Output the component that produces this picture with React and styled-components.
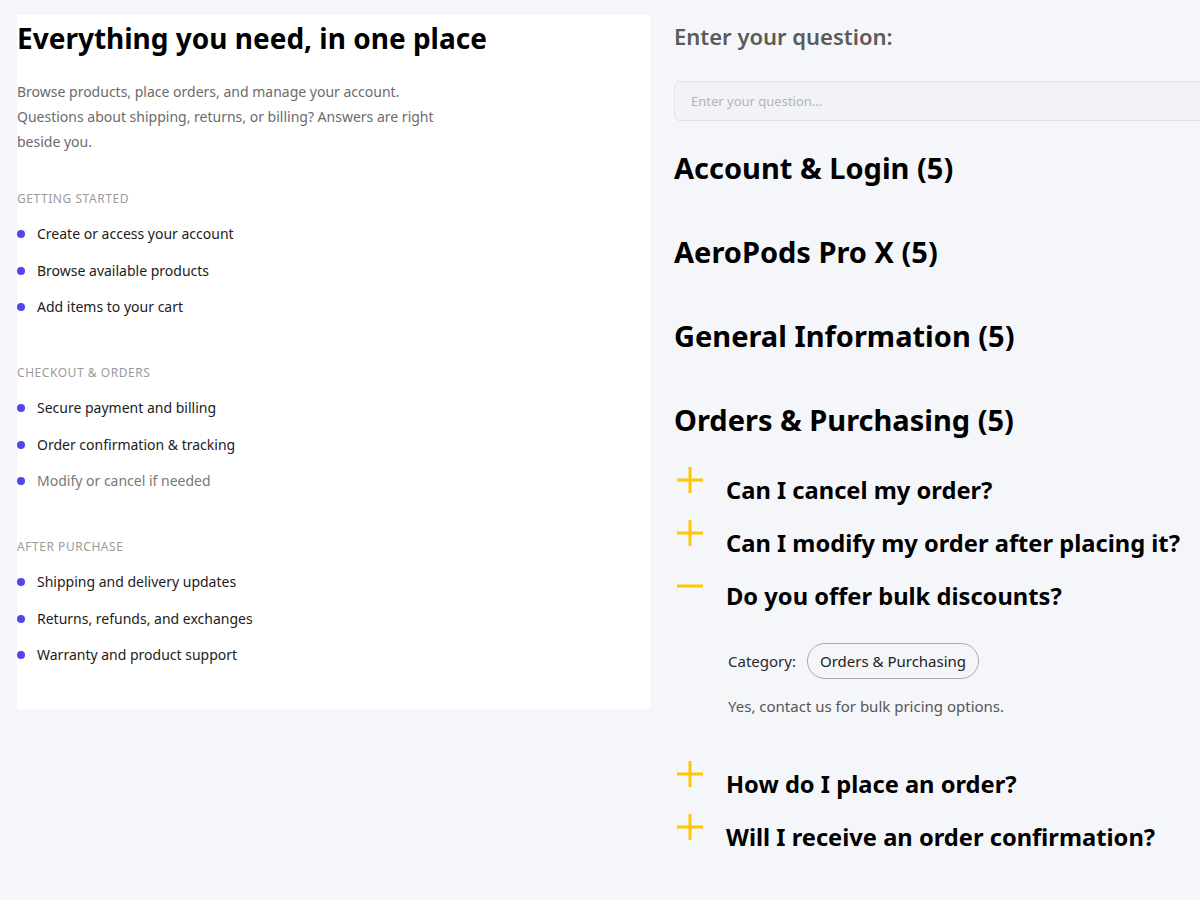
import React, { useState } from "react";
import styled, { createGlobalStyle } from "styled-components";

const GlobalStyle = createGlobalStyle`
  html, body {
    margin: 0;
    padding: 0;
    background: #f5f6fa;
    overflow: hidden;
  }
  body {
    font-family: "Noto Sans", "Open Sans", sans-serif;
    color: #111;
  }
`;

const Page = styled.div`
  display: grid;
  grid-template-columns: 633px 620px;
  column-gap: 24px;
  align-items: start;
  padding: 15px 0 0 17px;
  width: 1300px;
`;

const Guide = styled.aside`
  background: #fff;
  padding: 6px 0 43px;
`;

const Title = styled.h1`
  margin: 0;
  font-size: 28px;
  line-height: 34px;
  font-weight: 700;
  color: #000;
`;

const Intro = styled.p`
  margin: 24px 0 37px;
  max-width: 440px;
  font-size: 14px;
  line-height: 25px;
  color: #6b6b6b;
`;

const Sections = styled.div`
  display: flex;
  flex-direction: column;
  gap: 47px;
`;

const SectionLabel = styled.div`
  font-size: 12px;
  line-height: 16px;
  letter-spacing: 0.55px;
  text-transform: uppercase;
  color: #9b9b9b;
  margin-bottom: 16px;
`;

const Steps = styled.ul`
  list-style: none;
  margin: 0;
  padding: 0;
  display: flex;
  flex-direction: column;
  gap: 14.5px;
`;

const Step = styled.li`
  display: flex;
  align-items: center;
  gap: 12px;
  font-size: 14px;
  line-height: 22px;
  color: ${(props) => (props.muted ? "#787878" : "#1c1c1c")};

  &::before {
    content: "";
    width: 8px;
    height: 8px;
    border-radius: 50%;
    background: #5046e5;
    flex-shrink: 0;
  }
`;

const Help = styled.main`
  padding-top: 7px;
`;

const AskLabel = styled.label`
  display: block;
  font-size: 22px;
  line-height: 28px;
  font-weight: 600;
  color: #5b5b5b;
  margin-bottom: 31px;
`;

const AskInput = styled.input`
  display: block;
  box-sizing: border-box;
  width: 100%;
  height: 40px;
  padding: 0 16px;
  border: 1px solid #e2e3e8;
  border-radius: 6px;
  background: #f2f3f7;
  font-family: inherit;
  font-size: 13px;
  color: #333;
  outline: none;

  &::placeholder {
    color: #b3b3b8;
  }
`;

const Topics = styled.div`
  display: flex;
  flex-direction: column;
  gap: 50px;
  margin: 30px 0;
`;

const Topic = styled.h2`
  margin: 0;
  font-size: 29px;
  line-height: 34px;
  font-weight: 700;
  color: #000;
`;

const Questions = styled.div`
  display: flex;
  flex-direction: column;
  gap: 15px;
`;

const QuestionRow = styled.button`
  display: flex;
  align-items: flex-start;
  gap: 23px;
  padding: 0;
  border: 0;
  background: none;
  cursor: pointer;
  font-family: inherit;
  text-align: left;
  color: #000;
`;

const ToggleIcon = styled.svg`
  width: 26px;
  height: 26px;
  flex-shrink: 0;
  margin-left: 3px;
`;

const QuestionText = styled.span`
  margin-top: 8px;
  font-size: 23.7px;
  line-height: 30px;
  font-weight: 700;
`;

const Answer = styled.div`
  padding: 32px 0 29px 54px;
`;

const CategoryLine = styled.div`
  display: flex;
  align-items: center;
  gap: 11px;
  font-size: 15px;
  color: #2a2a2a;
`;

const Pill = styled.span`
  display: inline-flex;
  align-items: center;
  height: 36px;
  box-sizing: border-box;
  padding: 0 12px;
  border: 1px solid #ababab;
  border-radius: 18px;
  font-size: 15px;
  color: #222;
`;

const AnswerText = styled.p`
  margin: 16px 0 0;
  font-size: 15px;
  line-height: 22px;
  color: #555;
`;

const guide = [
  {
    label: "Getting started",
    steps: ["Create or access your account", "Browse available products", "Add items to your cart"],
  },
  {
    label: "Checkout & orders",
    steps: ["Secure payment and billing", "Order confirmation & tracking", "Modify or cancel if needed"],
    muted: 2,
  },
  {
    label: "After purchase",
    steps: ["Shipping and delivery updates", "Returns, refunds, and exchanges", "Warranty and product support"],
  },
];

const topics = ["Account & Login", "AeroPods Pro X", "General Information", "Orders & Purchasing"];

const faqs = [
  { q: "Can I cancel my order?", a: "Yes, orders can be cancelled before they ship." },
  { q: "Can I modify my order after placing it?", a: "Changes are possible until the order is processed." },
  { q: "Do you offer bulk discounts?", a: "Yes, contact us for bulk pricing options." },
  { q: "How do I place an order?", a: "Add items to your cart and proceed to checkout." },
  { q: "Will I receive an order confirmation?", a: "Yes, a confirmation email is sent right away." },
];

// plus when collapsed, minus when open
const Toggle = ({ open }) => (
  <ToggleIcon viewBox="0 0 26 26" fill="none" stroke="#ffc700" strokeWidth="3">
    <line x1="0" y1="13" x2="26" y2="13" />
    {!open && <line x1="13" y1="0" x2="13" y2="26" />}
  </ToggleIcon>
);

export default function App() {
  const [openIndex, setOpenIndex] = useState(2);

  return (
    <>
      <GlobalStyle />
      <Page>
        <Guide>
          <Title>Everything you need, in one place</Title>
          <Intro>
            Browse products, place orders, and manage your account. Questions about shipping, returns, or
            billing? Answers are right beside you.
          </Intro>
          <Sections>
            {guide.map((section) => (
              <section key={section.label}>
                <SectionLabel>{section.label}</SectionLabel>
                <Steps>
                  {section.steps.map((step, i) => (
                    <Step key={step} muted={section.muted === i}>
                      {step}
                    </Step>
                  ))}
                </Steps>
              </section>
            ))}
          </Sections>
        </Guide>

        <Help>
          <AskLabel htmlFor="ask">Enter your question:</AskLabel>
          <AskInput id="ask" placeholder="Enter your question..." />
          <Topics>
            {topics.map((t) => (
              <Topic key={t}>{t} (5)</Topic>
            ))}
          </Topics>
          <Questions>
            {faqs.map((item, i) => (
              <div key={item.q}>
                <QuestionRow onClick={() => setOpenIndex(openIndex === i ? -1 : i)}>
                  <Toggle open={openIndex === i} />
                  <QuestionText>{item.q}</QuestionText>
                </QuestionRow>
                {openIndex === i && (
                  <Answer>
                    <CategoryLine>
                      Category: <Pill>Orders &amp; Purchasing</Pill>
                    </CategoryLine>
                    <AnswerText>{item.a}</AnswerText>
                  </Answer>
                )}
              </div>
            ))}
          </Questions>
        </Help>
      </Page>
    </>
  );
}
